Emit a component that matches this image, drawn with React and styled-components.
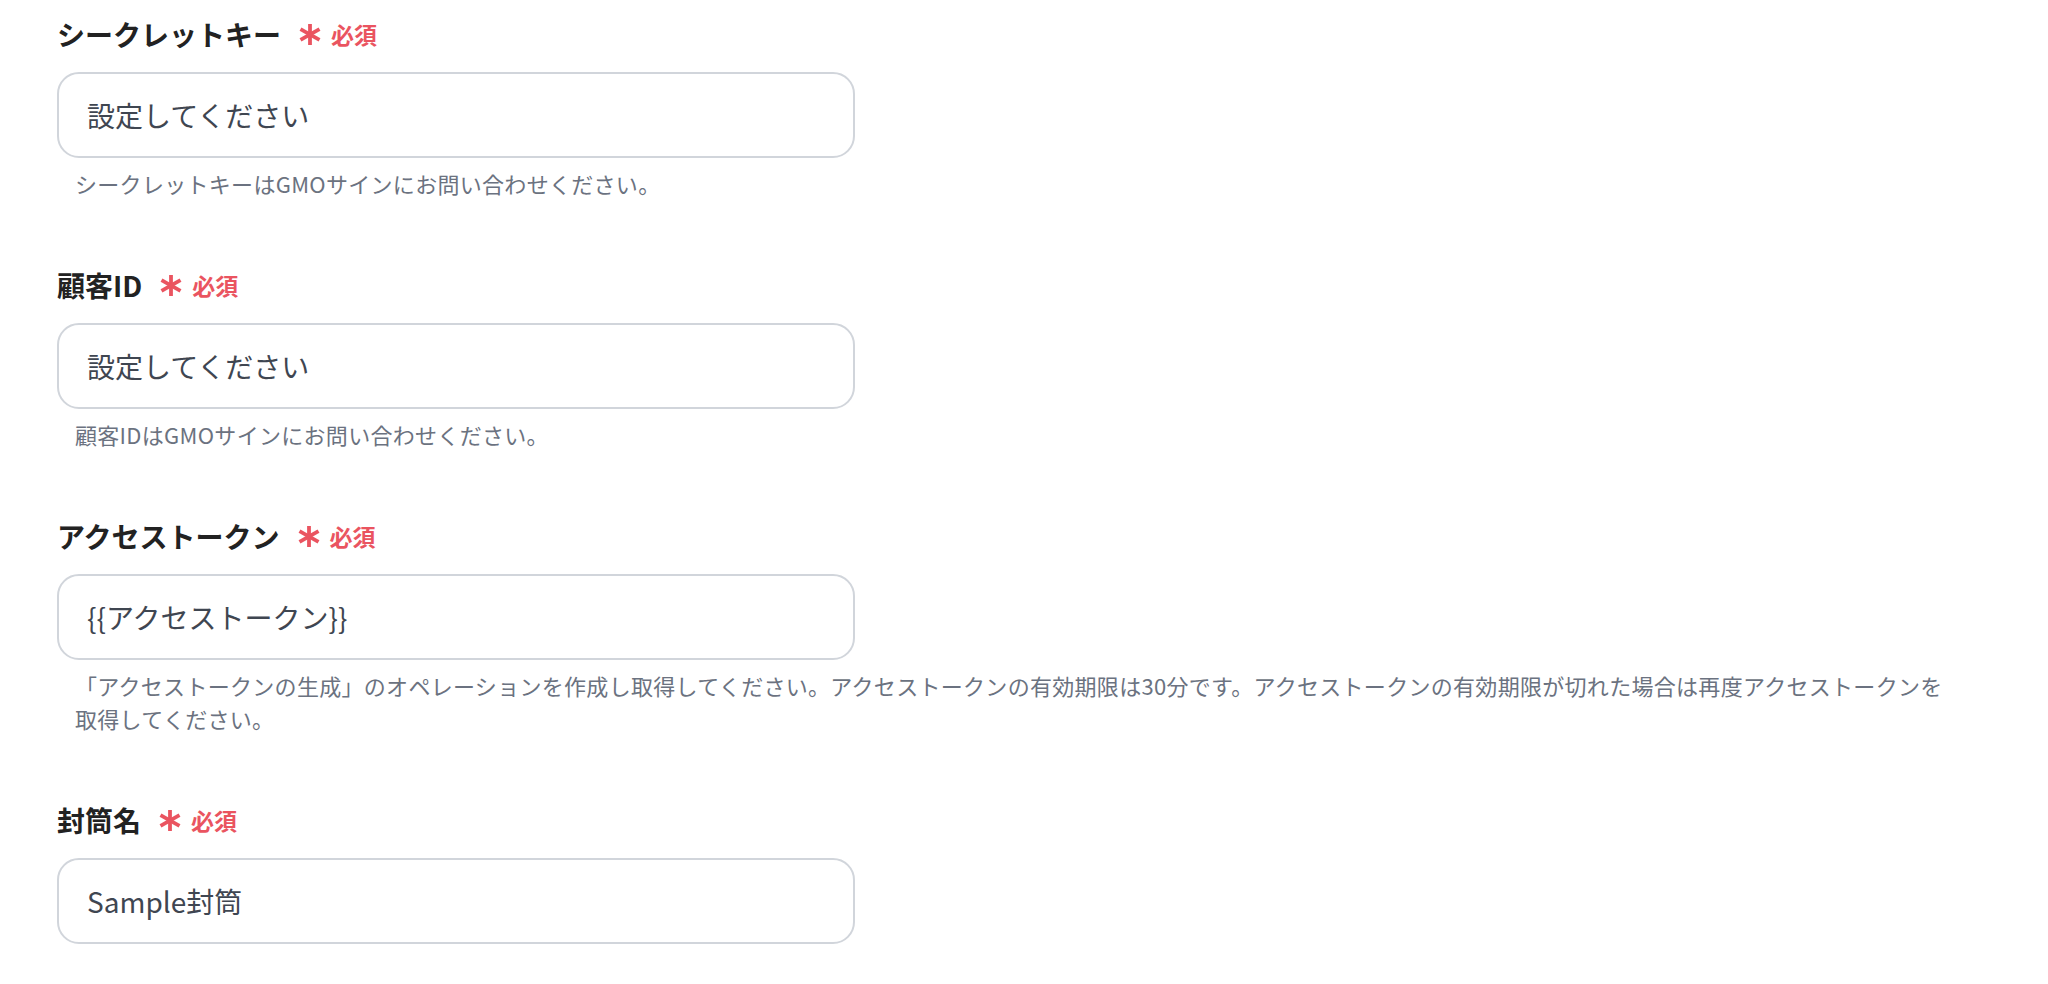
import React from "react";
import styled, { createGlobalStyle } from "styled-components";

const GlobalStyle = createGlobalStyle`
  html, body {
    margin: 0;
    padding: 0;
    background: #ffffff;
  }
  body {
    font-family: "Noto Sans CJK JP", "Noto Sans", sans-serif;
  }
`;

const Form = styled.div`
  display: flex;
  flex-direction: column;
  gap: 65px;
  padding: 14px 75px 0 57px;
`;

const Field = styled.div`
  display: flex;
  flex-direction: column;
`;

const LabelRow = styled.div`
  display: flex;
  align-items: center;
  height: 40px;
  margin-bottom: 18px;
`;

const LabelText = styled.span`
  font-size: 28px;
  font-weight: 700;
  color: #222222;
  line-height: 40px;
`;

const Required = styled.span`
  display: inline-flex;
  align-items: center;
  margin-left: 18px;
  gap: 10px;
  color: #ea5460;
  font-size: 23px;
  font-weight: 700;
  line-height: 40px;
`;

const Input = styled.input`
  box-sizing: border-box;
  width: 798px;
  height: 86px;
  border: 2px solid #d1d5db;
  border-radius: 22px;
  padding: 0 28px;
  font-family: "Noto Sans CJK JP", "Noto Sans", sans-serif;
  font-size: 28px;
  color: #3f4651;
  background: #ffffff;
  outline: none;

  &::placeholder {
    color: #3f4651;
    opacity: 1;
  }
`;

const Help = styled.p`
  margin: 9px 0 0 0;
  padding: 0 18px;
  font-size: 22px;
  line-height: 33px;
  letter-spacing: 0.3px;
  color: #6b7280;
`;

const Asterisk = () => (
  <svg width="22" height="21" viewBox="0 0 22 21" aria-hidden="true">
    <g stroke="#ea5460" strokeWidth="3.8" strokeLinecap="butt">
      <line x1="11" y1="0" x2="11" y2="21" />
      <line x1="1.5" y1="5.2" x2="20.5" y2="15.8" />
      <line x1="1.5" y1="15.8" x2="20.5" y2="5.2" />
    </g>
  </svg>
);

const fields = [
  {
    label: "シークレットキー",
    value: "",
    placeholder: "設定してください",
    help: "シークレットキーはGMOサインにお問い合わせください。",
  },
  {
    label: "顧客ID",
    value: "",
    placeholder: "設定してください",
    help: "顧客IDはGMOサインにお問い合わせください。",
  },
  {
    label: "アクセストークン",
    value: "{{アクセストークン}}",
    placeholder: "",
    help:
      "「アクセストークンの生成」のオペレーションを作成し取得してください。アクセストークンの有効期限は30分です。アクセストークンの有効期限が切れた場合は再度アクセストークンを取得してください。",
  },
  {
    label: "封筒名",
    value: "Sample封筒",
    placeholder: "",
    help: null,
  },
];

export default function App() {
  return (
    <>
      <GlobalStyle />
      <Form>
        {fields.map((f) => (
          <Field key={f.label}>
            <LabelRow>
              <LabelText>{f.label}</LabelText>
              <Required>
                <Asterisk />
                必須
              </Required>
            </LabelRow>
            <Input
              type="text"
              defaultValue={f.value}
              placeholder={f.placeholder}
              readOnly
            />
            {f.help && <Help>{f.help}</Help>}
          </Field>
        ))}
      </Form>
    </>
  );
}
